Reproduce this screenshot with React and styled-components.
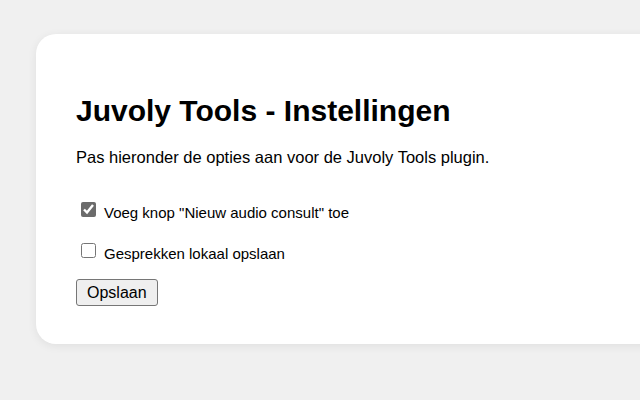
import React from "react"
import styled, { createGlobalStyle } from "styled-components"

const GlobalStyle = createGlobalStyle`
  html, body {
    margin: 0;
    padding: 0;
    overflow: hidden;
    background: #f0f0f0;
    font-family: "Liberation Sans", Arial, sans-serif;
    color: #000;
  }
`

const App = () => {
  return (
    <Page>
      <GlobalStyle />
      <Card>
        <Title>Juvoly Tools - Instellingen</Title>
        <Intro>Pas hieronder de opties aan voor de Juvoly Tools plugin.</Intro>
        <Options>
          <Option>
            <Checkbox type="checkbox" defaultChecked />
            Voeg knop "Nieuw audio consult" toe
          </Option>
          <Option>
            <Checkbox type="checkbox" />
            Gesprekken lokaal opslaan
          </Option>
        </Options>
        <SaveButton type="button">Opslaan</SaveButton>
      </Card>
    </Page>
  )
}

export default App

const Page = styled.div`
  padding: 34px 0 0 36px;
  height: 400px;
  box-sizing: border-box;
`

const Card = styled.div`
  width: 600px;
  padding: 61px 40px 38px;
  background: #fff;
  border-radius: 20px;
  box-shadow: 0 2px 10px rgba(0, 0, 0, 0.07);
`

const Title = styled.h1`
  margin: 0 0 21px;
  font-size: 30px;
  line-height: 32px;
  font-weight: 700;
`

const Intro = styled.p`
  margin: 0 0 36px;
  font-size: 16.5px;
  line-height: 18px;
`

const Options = styled.div`
  display: flex;
  flex-direction: column;
  row-gap: 21px;
  margin-bottom: 16px;
`

const Option = styled.label`
  display: flex;
  align-items: center;
  height: 20px;
  font-size: 15px;
  padding-left: 5px;
`

const Checkbox = styled.input`
  width: 15px;
  height: 15px;
  margin: 0 8px 5px 0;
  accent-color: #6b6b6b;
`

const SaveButton = styled.button`
  height: 27px;
  padding: 0 10px;
  font-family: "Liberation Sans", Arial, sans-serif;
  font-size: 16px;
  color: #000;
  background: #efefef;
  border: 1px solid #767676;
  border-radius: 3px;
`
